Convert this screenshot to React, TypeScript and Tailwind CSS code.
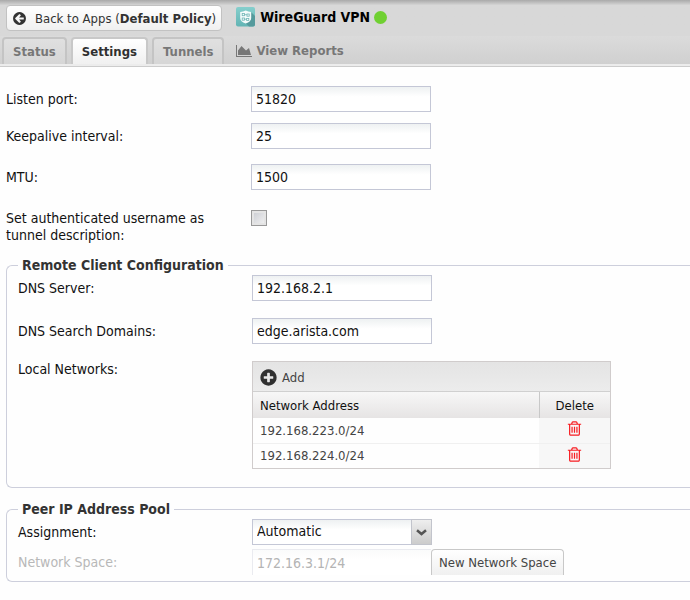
import { ReactNode, useState } from 'react';

const ICONS = {
  back: 'M1408 960v-128q0-26-19-45t-45-19h-502l189-189q19-19 19-45t-19-45l-91-91q-18-18-45-18t-45 18l-362 362-91 91q-18 18-18 45t18 45l91 91 362 362q18 18 45 18t45-18l91-91q18-18 18-45t-18-45l-189-189h502q26 0 45-19t19-45zm256-64q0 209-103 385.5t-279.5 279.5-385.5 103-385.5-103-279.5-279.5-103-385.5 103-385.5 279.5-279.5 385.5-103 385.5 103 279.5 279.5 103 385.5z',
  plus: 'M1344 960v-128q0-26-19-45t-45-19h-256v-256q0-26-19-45t-45-19h-128q-26 0-45 19t-19 45v256h-256q-26 0-45 19t-19 45v128q0 26 19 45t45 19h256v256q0 26 19 45t45 19h128q26 0 45-19t19-45v-256h256q26 0 45-19t19-45zm320-64q0 209-103 385.5t-279.5 279.5-385.5 103-385.5-103-279.5-279.5-103-385.5 103-385.5 279.5-279.5 385.5-103 385.5 103 279.5 279.5 103 385.5z',
  trash:
    'M704 736v576q0 14-9 23t-23 9h-64q-14 0-23-9t-9-23v-576q0-14 9-23t23-9h64q14 0 23 9t9 23zm256 0v576q0 14-9 23t-23 9h-64q-14 0-23-9t-9-23v-576q0-14 9-23t23-9h64q14 0 23 9t9 23zm256 0v576q0 14-9 23t-23 9h-64q-14 0-23-9t-9-23v-576q0-14 9-23t23-9h64q14 0 23 9t9 23zm128 724v-948h-896v948q0 22 7 40.5t14.5 27 10.5 8.5h832q3 0 10.5-8.5t14.5-27 7-40.5zm-672-1076h448l-48-117q-7-9-17-11h-317q-10 2-17 11zm928 32v64q0 14-9 23t-23 9h-96v948q0 83-47 143.5t-113 60.5h-832q-66 0-113-58.5t-47-141.5v-952h-96q-14 0-23-9t-9-23v-64q0-14 9-23t23-9h309l70-167q15-37 54-63t79-26h320q40 0 79 26t54 63l70 167h309q14 0 23 9t9 23z',
};

const Icon = ({ name, className }: { name: keyof typeof ICONS; className: string }) => (
  <svg className={className} viewBox="0 0 1792 1792" fill="currentColor" aria-hidden="true">
    <path d={ICONS[name]} />
  </svg>
);

const AppLogo = () => (
  <svg className="h-5 w-5" viewBox="0 0 20 20" aria-hidden="true">
    <defs>
      <linearGradient id="logo" x1="0" y1="0" x2="0" y2="1">
        <stop offset="0" stopColor="#86cfcd" />
        <stop offset="1" stopColor="#62b4b4" />
      </linearGradient>
    </defs>
    <rect width="19" height="19.500" rx="2" fill="url(#logo)" />
    <path d="M15 5 L19 9 V17.500 Q19 19.500 17 19.500 H13 L9.500 16 Z" fill="#559a9c" />
    <path d="M4.200 5 Q7.200 5 9.700 3.600 Q12.200 5 15.200 5 V11 Q15.200 14.500 9.700 16.500 Q4.200 14.500 4.200 11 Z" fill="#f4fbfb" />
    <g fill="none" stroke="#6fb5b5" strokeWidth="0.800">
      <rect x="6.200" y="6.500" width="2.200" height="2.200" />
      <rect x="11" y="7" width="2.200" height="2.200" />
      <rect x="6.200" y="11" width="2.200" height="2.200" />
      <rect x="10.600" y="11.400" width="2.200" height="2.200" />
      <path d="M8.400 7.700 H11 M8.400 12.200 H10.600" />
    </g>
  </svg>
);

const Tab = ({ active, onClick, children }: { active: boolean; onClick: () => void; children: ReactNode }) => (
  <button
    role="tab"
    aria-selected={active}
    onClick={onClick}
    className={
      active
        ? 'h-[27px] rounded-t border-2 border-b-0 border-[#c8c8c8] bg-linear-to-b from-white to-[#f0f0f0] px-[9px] font-bold text-[#303030]'
        : 'h-[27px] rounded-t border-2 border-b-0 border-[#c4c4c4] bg-linear-to-b from-[#e0e0e0] to-[#d6d6d6] px-[9px] font-bold text-[#777777]'
    }
  >
    {children}
  </button>
);

const inputStyle =
  'h-[26px] w-[180px] border border-[#c4c7d6] bg-linear-to-b from-[#eef1f2] to-white to-40% px-1 pb-px text-[#111111] outline-none';

const Field = ({ id, label, value, labelStyle }: { id: string; label: string; value: string; labelStyle: string }) => (
  <div className="flex items-center">
    <label htmlFor={id} className={labelStyle}>
      {label}
    </label>
    <input id={id} defaultValue={value} className={inputStyle} />
  </div>
);

const Panel = ({ title, className, children }: { title: string; className: string; children: ReactNode }) => (
  <fieldset className={`ml-[6px] rounded-l-md border border-r-0 border-[#cdcfdc] pl-[11px] ${className}`}>
    <legend className="px-1 font-bold leading-5 text-[#333333]">{title}</legend>
    {children}
  </fieldset>
);

const outerLabel = 'w-[245px] shrink-0';
const innerLabel = 'w-[234px] shrink-0';

const App = () => {
  const [tab, setTab] = useState('Settings');
  const [networks, setNetworks] = useState(['192.168.223.0/24', '192.168.224.0/24']);

  return (
    <div className="min-h-screen bg-[#fefefe] font-['DejaVu_Sans_Condensed','Noto_Sans',sans-serif] text-sm leading-[17px] text-[#111111]">
      <header className="flex h-9 items-start bg-linear-to-b from-[#a9a9a9] to-[#d8d8d8] to-15% pt-[5px] pl-[6px]">
        <button className="flex h-[26px] items-center gap-2 rounded border border-[#c2c2c2] bg-linear-to-b from-white to-[#f0f0f0] px-[5px] text-[13px] text-[#333333]">
          <Icon name="back" className="h-[15px] w-[15px]" />
          <span>
            Back to Apps (<b>Default Policy</b>)
          </span>
        </button>
        <h1 className="ml-[14px] flex h-6 items-center gap-1 font-bold text-black">
          <AppLogo />
          WireGuard VPN
          <span className="h-[13px] w-[13px] rounded-full bg-[#70d032]" />
        </h1>
      </header>

      <nav
        role="tablist"
        className="flex h-7 items-start gap-1 bg-linear-to-b from-[#dbdbdb] to-[#d0d0d0] pt-px pl-[2px] text-[13px]"
      >
        {['Status', 'Settings', 'Tunnels'].map(name => (
          <Tab key={name} active={tab === name} onClick={() => setTab(name)}>
            {name}
          </Tab>
        ))}
        <a href="#reports" className="flex h-[27px] items-center gap-1 pl-2 font-bold text-[#777777]">
          <svg className="h-[14px] w-4" viewBox="0 0 2048 1792" fill="currentColor" aria-hidden="true">
            <path d="M2048 1536v128h-2048v-1536h128v1408h1920zm-384-1024l256 896h-1664v-576l448-576 576 576z" />
          </svg>
          View Reports
        </a>
      </nav>
      <div className="h-[3px] border-b border-[#cccccc] bg-[#ececec]" />

      <main className="pt-[19px] pb-4">
        <div className="pl-[6px]">
          <Field id="port" label="Listen port:" value="51820" labelStyle={outerLabel} />
          <div className="mt-[11px] mb-[15px]">
            <Field id="keepalive" label="Keepalive interval:" value="25" labelStyle={outerLabel} />
          </div>
          <Field id="mtu" label="MTU:" value="1500" labelStyle={outerLabel} />
          <div className="mt-5 flex items-start">
            <label htmlFor="username" className={`${outerLabel} pr-8`}>
              Set authenticated username as tunnel description:
            </label>
            <input
              id="username"
              type="checkbox"
              className="h-4 w-4 appearance-none border border-[#999999] bg-linear-to-br from-[#c8cad0] to-[#f4f4f4] inset-ring-2 inset-ring-[#e4e4e4] checked:bg-[#777777]"
            />
          </div>
        </div>

        <Panel title="Remote Client Configuration" className="mt-[11px] pb-[18px]">
          <div className="flex flex-col gap-[17px]">
            <Field id="dns" label="DNS Server:" value="192.168.2.1" labelStyle={innerLabel} />
            <Field id="domains" label="DNS Search Domains:" value="edge.arista.com" labelStyle={innerLabel} />
            <div className="flex items-start">
              <span id="networks" className={innerLabel}>
                Local Networks:
              </span>
              <div className="w-[359px] border border-[#d0cccc] text-[13px]">
                <div className="flex h-[30px] items-end border-b border-[#d0d0d0] bg-linear-to-b from-[#e4e4e4] to-[#ececec] px-[6px] pb-1">
                  <button
                    className="flex items-center gap-1 text-[#444444]"
                    onClick={() => setNetworks([...networks, '0.0.0.0/0'])}
                  >
                    <Icon name="plus" className="h-[19px] w-[19px] text-[#303030]" />
                    Add
                  </button>
                </div>
                <table className="w-full table-fixed" aria-labelledby="networks">
                  <thead>
                    <tr className="h-[26px] bg-linear-to-b from-[#f7f7f7] to-[#e6e4e4] text-[#111111]">
                      <th className="border-r border-[#c8c8c8] px-[7px] text-left font-normal">Network Address</th>
                      <th className="w-[71px] text-center font-normal">Delete</th>
                    </tr>
                  </thead>
                  <tbody>
                    {networks.map((network, i) => (
                      <tr key={i} className="h-[25px] border-b border-[#f0f0f0] last:border-b-0">
                        <td className="px-[7px] text-[#444444]">{network}</td>
                        <td className="bg-[#f7f7f7] pb-[3px] text-center">
                          <button
                            aria-label={`Delete ${network}`}
                            className="block w-full"
                            onClick={() => setNetworks(networks.filter((_, n) => n !== i))}
                          >
                            <Icon name="trash" className="mx-auto h-[17px] w-[17px] text-[#f81d22]" />
                          </button>
                        </td>
                      </tr>
                    ))}
                  </tbody>
                </table>
              </div>
            </div>
          </div>
        </Panel>

        <Panel title="Peer IP Address Pool" className="mt-[11px] pb-[6px]">
          <div className="flex items-center">
            <label htmlFor="assignment" className={innerLabel}>
              Assignment:
            </label>
            <div className="relative">
              <select id="assignment" className={`${inputStyle} block appearance-none`}>
                <option>Automatic</option>
                <option>Self-assigned</option>
              </select>
              <span className="pointer-events-none absolute inset-y-0 right-0 flex w-[21px] items-center justify-center border border-[#c2c4cc] bg-linear-to-b from-[#eeeeee] to-[#cccccc]">
                <svg className="h-[7px] w-[11px]" viewBox="0 0 11 7" fill="none" stroke="#555555" strokeWidth="2.500">
                  <path d="M1 1.200 L5.500 5 L10 1.200" />
                </svg>
              </span>
            </div>
          </div>
          <div className="mt-1 flex items-center">
            <label htmlFor="space" className={`${innerLabel} text-[#b8b8b8]`}>
              Network Space:
            </label>
            <input
              id="space"
              disabled
              defaultValue="172.16.3.1/24"
              className="h-[26px] w-[179px] border border-r-0 border-b-0 border-[#eaebf0] bg-linear-to-b from-[#fafbfb] to-white to-40% px-1 text-[#b4b4b4]"
            />
            <button className="h-[26px] rounded-t border border-b-0 border-[#c8c8c8] bg-linear-to-b from-white to-[#f0f0f0] px-[7px] text-[13px] text-[#444444]">
              New Network Space
            </button>
          </div>
        </Panel>
      </main>
    </div>
  );
};

export default App;
